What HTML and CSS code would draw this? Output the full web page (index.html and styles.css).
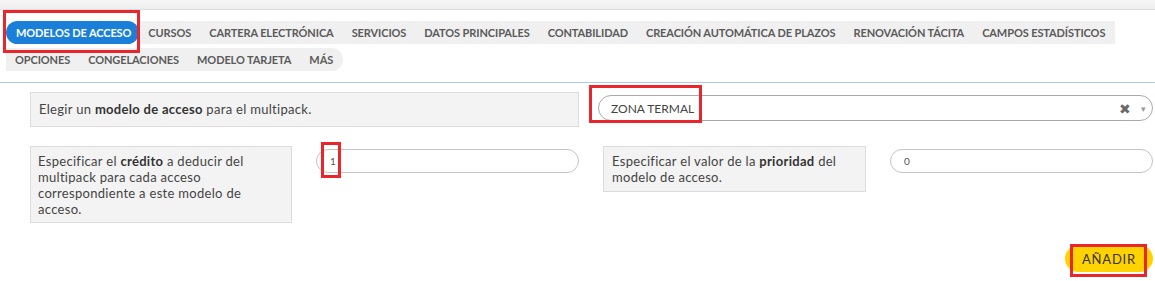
FILE: index.html
```html
<!DOCTYPE html>
<html lang="es">
<head>
<meta charset="utf-8">
<title>Modelos de acceso</title>
<link rel="stylesheet" href="styles.css">
</head>
<body>
<div class="topbar"></div>
<nav class="tabs">
  <span class="tab active">MODELOS DE ACCESO<i class="mark mark-tab"></i></span>
  <span class="tab">CURSOS</span>
  <span class="tab">CARTERA ELECTRÓNICA</span>
  <span class="tab">SERVICIOS</span>
  <span class="tab">DATOS PRINCIPALES</span>
  <span class="tab">CONTABILIDAD</span>
  <span class="tab">CREACIÓN AUTOMÁTICA DE PLAZOS</span>
  <span class="tab">RENOVACIÓN TÁCITA</span>
  <span class="tab end1">CAMPOS ESTADÍSTICOS</span>
  <span class="break"></span>
  <span class="tab">OPCIONES</span>
  <span class="tab">CONGELACIONES</span>
  <span class="tab">MODELO TARJETA</span>
  <span class="tab last">MÁS</span>
</nav>
<hr class="divider">
<main class="form">
  <div class="row row-one">
    <div class="label wide">Elegir un <b>modelo de acceso</b> para el multipack.</div>
    <div class="select">
      <span class="value">ZONA TERMAL<i class="mark mark-select"></i></span>
      <span class="clear">✖</span>
      <span class="caret">▾</span>
    </div>
  </div>
  <div class="row row-two">
    <div class="label tall">Especificar el <b>crédito</b> a deducir del multipack para cada acceso correspondiente a este modelo de acceso.</div>
    <div class="input"><span class="num">1<i class="mark mark-num"></i></span></div>
    <div class="label short">Especificar el valor de la <b>prioridad</b> del modelo de acceso.</div>
    <div class="input"><span class="num">0</span></div>
  </div>
  <div class="actions">
    <button class="btn">AÑADIR<i class="mark mark-btn"></i></button>
  </div>
</main>
</body>
</html>
```

FILE: styles.css
```css
* { box-sizing: border-box; }
html, body { margin: 0; padding: 0; }
body {
  width: 1155px;
  height: 281px;
  background: #fff;
  font-family: "Lato", "Noto Sans", sans-serif;
  color: #444;
  overflow: hidden;
}
.topbar {
  height: 10px;
  background: linear-gradient(#f7f7f7, #eeeeee);
  border-bottom: 1px solid #dedede;
}
.tabs {
  display: flex;
  flex-wrap: wrap;
  width: 1149px;
  margin: 11px 0 0 6px;
  row-gap: 2px;
}
.break { flex-basis: 100%; height: 0; }
.tab {
  position: relative;
  height: 23px;
  line-height: 23px;
  padding: 0 9px;
  background: #f0f0f0;
  color: #5a5a5a;
  font-size: 11px;
  font-weight: 700;
  letter-spacing: -0.1px;
  white-space: nowrap;
}
.tab.active {
  background: #1a7fd8;
  color: #fff;
  border-radius: 12px;
  padding: 0 8px 0 10px;
}
.tab.end1 { padding-right: 10px; }
.tab.last { border-radius: 0 12px 12px 0; padding-right: 10px; }
.divider {
  margin: 11px 0 0 0;
  border: 0;
  border-top: 1px solid #a9cbea;
  height: 0;
}
.form {
  padding: 9px 2px 0 30px;
}
.row {
  display: flex;
  align-items: flex-start;
}
.label {
  background: #f3f3f3;
  border: 1px solid #dcdcdc;
  font-size: 13px;
  letter-spacing: 0.3px;
  color: #444;
  line-height: 16px;
}
.label b { font-weight: 700; color: #333; }
.label.wide {
  width: 549px;
  height: 35px;
  padding: 8px 8px;
}
.select {
  margin-left: 19px;
  margin-top: 3px;
  flex: 1;
  height: 26px;
  border: 1px solid #aaa;
  border-radius: 13px;
  display: flex;
  align-items: center;
  padding: 0 6px 0 12px;
  font-size: 12px;
  color: #444;
}
.select .value { position: relative; flex: 1; }
.select .clear { color: #6a6a6a; font-size: 14px; margin-right: 10px; }
.select .caret { color: #999; font-size: 9px; }
.row-two { margin-top: 19px; }
.label.tall {
  width: 262px;
  height: 77px;
  padding: 6px 8px 6px 7px;
}
.label.short {
  width: 263px;
  height: 46px;
  padding: 6px 8px 6px 8px;
  margin-left: 24px;
}
.input {
  width: 263px;
  height: 24px;
  margin-top: 3px;
  margin-left: 24px;
  border: 1px solid #c4c4c4;
  border-radius: 12px;
  padding-left: 13px;
  display: flex;
  align-items: center;
  font-size: 10px;
  color: #555;
}
.num { position: relative; }
.actions {
  display: flex;
  justify-content: flex-end;
  margin-top: 22px;
}
.btn {
  position: relative;
  width: 88px;
  height: 27px;
  border: 0;
  border-radius: 14px;
  background: #ffd200;
  color: #333;
  font-family: "Lato", sans-serif;
  font-size: 13px;
  letter-spacing: 0.8px;
  padding: 0;
}
.mark {
  position: absolute;
  z-index: 5;
  border: 3px solid #e8262b;
  pointer-events: none;
}
.mark-tab { left: -3px; top: -11px; width: 137px; height: 43px; }
.mark-select { left: -22px; top: -16px; width: 113px; height: 38px; }
.mark-num { left: -9px; top: -13px; width: 20px; height: 36px; }
.mark-btn { left: 5px; top: -1px; width: 77px; height: 33px; }
```
